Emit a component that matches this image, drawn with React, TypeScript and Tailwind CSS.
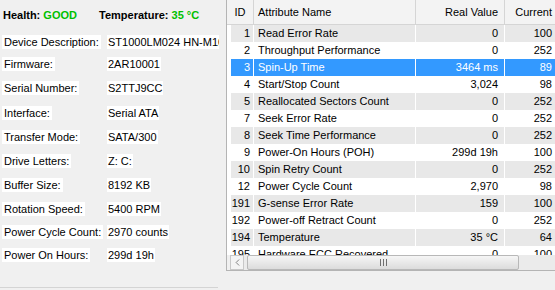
import { ChevronLeft } from "lucide-react";

const info = [
  { label: "Device Description:", value: "ST1000LM024 HN-M101MBB", h: "h-[22px]" },
  { label: "Firmware:", value: "2AR10001", h: "h-[23px]" },
  { label: "Serial Number:", value: "S2TTJ9CC", h: "h-[25px]" },
  { label: "Interface:", value: "Serial ATA", h: "h-[24px]" },
  { label: "Transfer Mode:", value: "SATA/300", h: "h-[24px]" },
  { label: "Drive Letters:", value: "Z: C:", h: "h-[24px]" },
  { label: "Buffer Size:", value: "8192 KB", h: "h-[25px]" },
  { label: "Rotation Speed:", value: "5400 RPM", h: "h-[23px]" },
  { label: "Power Cycle Count:", value: "2970 counts", h: "h-[23px]" },
  { label: "Power On Hours:", value: "299d 19h", h: "h-[23px]" },
];

const attrs = [
  { id: 1, name: "Read Error Rate", real: "0", cur: 100 },
  { id: 2, name: "Throughput Performance", real: "0", cur: 252 },
  { id: 3, name: "Spin-Up Time", real: "3464 ms", cur: 89 },
  { id: 4, name: "Start/Stop Count", real: "3,024", cur: 98 },
  { id: 5, name: "Reallocated Sectors Count", real: "0", cur: 252 },
  { id: 7, name: "Seek Error Rate", real: "0", cur: 252 },
  { id: 8, name: "Seek Time Performance", real: "0", cur: 252 },
  { id: 9, name: "Power-On Hours (POH)", real: "299d 19h", cur: 100 },
  { id: 10, name: "Spin Retry Count", real: "0", cur: 252 },
  { id: 12, name: "Power Cycle Count", real: "2,970", cur: 98 },
  { id: 191, name: "G-sense Error Rate", real: "159", cur: 100 },
  { id: 192, name: "Power-off Retract Count", real: "0", cur: 252 },
  { id: 194, name: "Temperature", real: "35 °C", cur: 64 },
  { id: 195, name: "Hardware ECC Recovered", real: "0", cur: 100 },
];

const App = () => {
  return (
    <div className="w-[555px] h-[290px] flex bg-[#f0f0f0] overflow-hidden font-['Liberation_Sans',Arial,sans-serif] text-[11px] text-black">
      {/* left: drive info */}
      <div className="w-[226px] shrink-0 flex flex-col">
        <div className="h-[31px] flex items-center font-bold pb-[1px]">
          <div className="w-[99px] pl-[3px]">
            Health: <span className="text-[#00c000]">GOOD</span>
          </div>
          <div>
            Temperature: <span className="text-[#00c000]">35 °C</span>
          </div>
        </div>
        {info.map((row) => (
          <div key={row.label} className={`${row.h} flex items-center`}>
            <div className="w-[107px] pl-[2px]">
              <span className="bg-white px-[2px] leading-[14px] inline-block">{row.label}</span>
            </div>
            <div className="w-[112px] overflow-hidden whitespace-nowrap">
              <span className="bg-white px-[1px] leading-[14px] inline-block">{row.value}</span>
            </div>
          </div>
        ))}
        <div className="mt-auto mb-[2px] h-px w-[218px] bg-[#d4d4d4]" />
      </div>

      {/* right: SMART table */}
      <div className="flex-1 flex flex-col">
        <div className="h-[271px] flex flex-col border-l border-b border-[#b4b4b4] bg-white overflow-hidden">
          <div className="h-[25px] shrink-0 flex bg-[#f3f3f3] border-b border-[#d5d5d5] whitespace-nowrap">
            <div className="w-[27px] shrink-0 flex items-center justify-center border-r border-[#d5d5d5]">ID</div>
            <div className="w-[162px] shrink-0 flex items-center pl-[4px] border-r border-[#d5d5d5]">Attribute Name</div>
            <div className="w-[89px] shrink-0 flex items-center justify-end pr-[6px] border-r border-[#d5d5d5]">Real Value</div>
            <div className="flex-1 flex items-center justify-end pr-[3px]">Current</div>
          </div>
          <div className="flex-1 overflow-hidden">
            {attrs.map((a, i) => {
              const sel = a.id === 3;
              const bg = sel ? "bg-[#3399ff] text-white" : i % 2 === 0 ? "bg-[#e8e8e8]" : "bg-white";
              return (
                <div key={a.id} className="h-[17px] flex whitespace-nowrap">
                  <div className="w-[4px] shrink-0 bg-white" />
                  <div className={`flex-1 flex items-center ${bg}`}>
                    <div className="w-[23px] shrink-0 text-right pr-[3px] border-r border-white h-full leading-[17px]">{a.id}</div>
                    <div className="w-[162px] shrink-0 pl-[4px] border-r border-white h-full leading-[17px]">{a.name}</div>
                    <div className="w-[89px] shrink-0 text-right pr-[6px] border-r border-white h-full leading-[17px]">{a.real}</div>
                    <div className="flex-1 text-right pr-[3px] h-full leading-[17px]">{a.cur}</div>
                  </div>
                </div>
              );
            })}
          </div>
          <div className="h-[15px] shrink-0 flex bg-[#f0f0f0] pl-[3px]">
            <div className="w-[14px] shrink-0 flex items-center justify-center border border-[#c8c8c8] bg-[#f4f4f4]">
              <ChevronLeft className="w-[11px] h-[11px] text-[#505050]" strokeWidth={1.5} />
            </div>
            <div className="flex-1 flex items-stretch pl-[3px] bg-[#ebebeb]">
              <div className="w-[272px] flex items-center justify-center border border-[#b8b8b8] rounded-[2px] bg-gradient-to-b from-[#f6f6f6] to-[#dcdcdc]">
                <div className="flex gap-[2px]">
                  <div className="w-px h-[7px] bg-[#707070]" />
                  <div className="w-px h-[7px] bg-[#707070]" />
                  <div className="w-px h-[7px] bg-[#707070]" />
                </div>
              </div>
            </div>
          </div>
        </div>
      </div>
    </div>
  );
};

export default App;
